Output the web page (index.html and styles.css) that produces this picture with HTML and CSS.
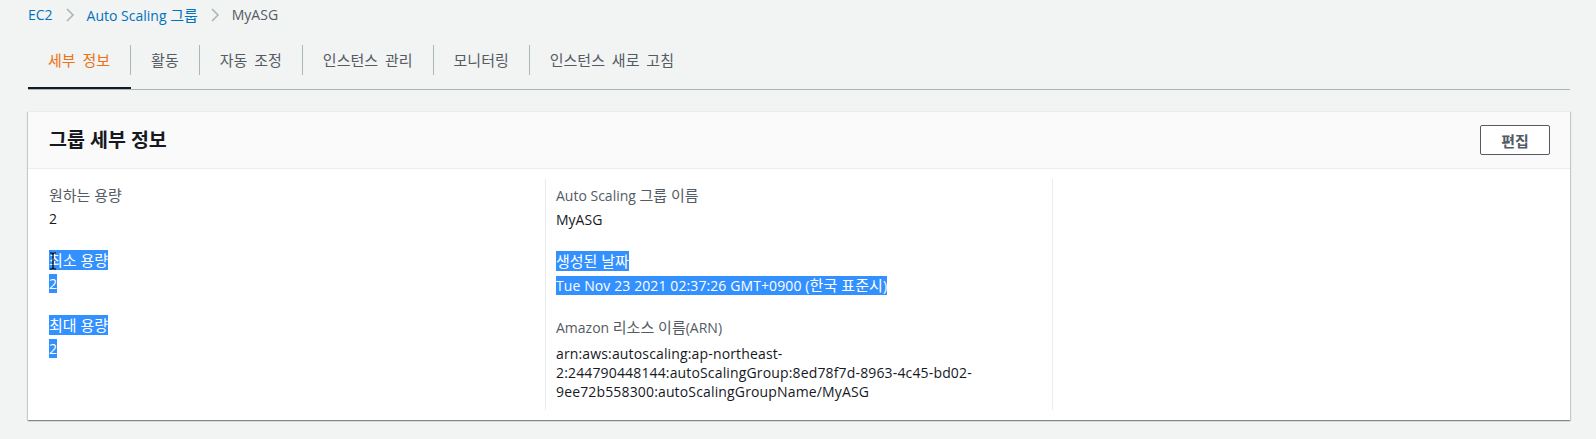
FILE: index.html
```html
<!DOCTYPE html>
<html lang="ko">
<head>
    <meta charset="UTF-8">
    <meta name="viewport" content="width=device-width, initial-scale=1.0">
    <title>MyASG | Auto Scaling 그룹</title>
    <link rel="stylesheet" href="styles.css">
</head>
<body>
    <div class="page">
        <nav class="breadcrumb">
            <a href="#">EC2</a>
            <span class="crumb-sep"><svg width="16" height="16" viewBox="0 0 16 16"><polyline points="5,2 11,8 5,14" fill="none" stroke="#aab7b8" stroke-width="1.6"/></svg></span>
            <a href="#">Auto Scaling <span class="ko">그룹</span></a>
            <span class="crumb-sep"><svg width="16" height="16" viewBox="0 0 16 16"><polyline points="5,2 11,8 5,14" fill="none" stroke="#aab7b8" stroke-width="1.6"/></svg></span>
            <span class="current">MyASG</span>
        </nav>

        <ul class="tabs">
            <li class="tab active"><span>세부 정보</span></li>
            <li class="tab"><span>활동</span></li>
            <li class="tab"><span>자동 조정</span></li>
            <li class="tab"><span>인스턴스 관리</span></li>
            <li class="tab"><span>모니터링</span></li>
            <li class="tab"><span>인스턴스 새로 고침</span></li>
        </ul>

        <div class="card">
            <div class="card-header">
                <h2>그룹 세부 정보</h2>
                <button type="button" class="btn">편집</button>
            </div>
            <div class="details">
                <div class="col">
                    <div class="item">
                        <div class="label ko">원하는 용량</div>
                        <div class="value">2</div>
                    </div>
                    <div class="item">
                        <div class="label ko"><span class="sel">최소 용량</span></div>
                        <div class="value"><span class="sel">2</span></div>
                        <svg class="cursor" width="8" height="18" viewBox="0 0 8 18"><path d="M1 1h2l1 1 1-1h2M4 2v14M1 17h2l1-1 1 1h2" fill="none" stroke="#000" stroke-width="1.2"/></svg>
                    </div>
                    <div class="item">
                        <div class="label ko"><span class="sel">최대 용량</span></div>
                        <div class="value"><span class="sel">2</span></div>
                    </div>
                </div>
                <div class="col">
                    <div class="item">
                        <div class="label">Auto Scaling <span class="ko">그룹 이름</span></div>
                        <div class="value">MyASG</div>
                    </div>
                    <div class="item">
                        <div class="label ko"><span class="sel">생성된 날짜 </span></div>
                        <div class="value date"><span class="sel">Tue Nov 23 2021 02:37:26 GMT+0900 (<span class="ko">한국 표준시</span>)</span></div>
                    </div>
                    <div class="item">
                        <div class="label">Amazon <span class="ko">리소스 이름</span>(ARN)</div>
                        <div class="value arn">arn:aws:autoscaling:ap-northeast-<wbr>2:244790448144:autoScalingGroup:8ed78f7d-<wbr>8963-<wbr>4c45-<wbr>bd02-<wbr>9ee72b558300:autoScalingGroupName/MyASG</div>
                    </div>
                </div>
                <div class="col"></div>
            </div>
        </div>
    </div>
</body>
</html>
```

FILE: styles.css
```css
body {
    margin: 0;
    background-color: #f2f3f3;
    font-family: "Open Sans", "Noto Sans CJK KR", sans-serif;
    font-size: 14px;
    color: #16191f;
}

.page {
    padding: 5px 26px 20px 28px;
}

/* Hangul renders a bit larger in the console font */
.ko {
    font-size: 15px;
}

/* breadcrumb */
.breadcrumb {
    display: flex;
    align-items: center;
    height: 20px;
    line-height: 20px;
}

.breadcrumb a {
    color: #0073bb;
    text-decoration: none;
}

.crumb-sep {
    display: flex;
    margin: 0 9px;
}

.breadcrumb .current {
    color: #545b64;
}

/* tabs */
.tabs {
    display: flex;
    list-style: none;
    margin: 5px 0 0;
    padding: 0;
    border-bottom: 1px solid #aab7b8;
}

.tab {
    padding: 15px 0 12px;
    border-bottom: 2px solid transparent;
    color: #545b64;
    font-size: 15px;
    word-spacing: 3px;
}

.tab span {
    display: block;
    line-height: 30px;
    padding: 0 20px;
    border-right: 1px solid #aab7b8;
}

.tab:last-child span {
    border-right: none;
}

.tab.active {
    color: #ec7211;
    border-bottom-color: #16191f;
}

/* card */
.card {
    margin-top: 21px;
    background-color: #fff;
    border-top: 1px solid #eaeded;
    box-shadow: 0 1px 1px 0 rgba(0, 28, 36, 0.3), 1px 1px 1px 0 rgba(0, 28, 36, 0.15), -1px 1px 1px 0 rgba(0, 28, 36, 0.15);
}

.card-header {
    display: flex;
    justify-content: space-between;
    align-items: center;
    padding: 13px 20px 13px 21px;
    background-color: #fafafa;
    border-bottom: 1px solid #eaeded;
}

.card-header h2 {
    margin: 0;
    font-size: 19.5px;
    line-height: 24px;
    font-weight: 700;
}

.btn {
    width: 70px;
    height: 30px;
    padding: 0;
    background-color: #fff;
    border: 1px solid #545b64;
    border-radius: 2px;
    color: #545b64;
    font-family: inherit;
    font-size: 15px;
    font-weight: 700;
    cursor: pointer;
}

.details {
    display: grid;
    grid-template-columns: 496px 507px 1fr;
    padding: 10px 20px 10px 21px;
}

.col {
    padding: 6px 0 9px;
}

.col + .col {
    border-left: 1px solid #eaeded;
    padding-left: 10px;
}

.item {
    position: relative;
    margin-bottom: 21px;
}

.item:last-child {
    margin-bottom: 0;
}

.label {
    line-height: 20px;
    color: #545b64;
}

.value {
    margin-top: 4px;
    line-height: 20px;
}

.date {
    letter-spacing: 0.1px;
}

.arn {
    margin-top: 6px;
    line-height: 19px;
    letter-spacing: 0.15px;
}

.sel {
    background-color: #3390ff;
    color: #fff;
}

.cursor {
    position: absolute;
    left: 0;
    top: 2px;
}
```
